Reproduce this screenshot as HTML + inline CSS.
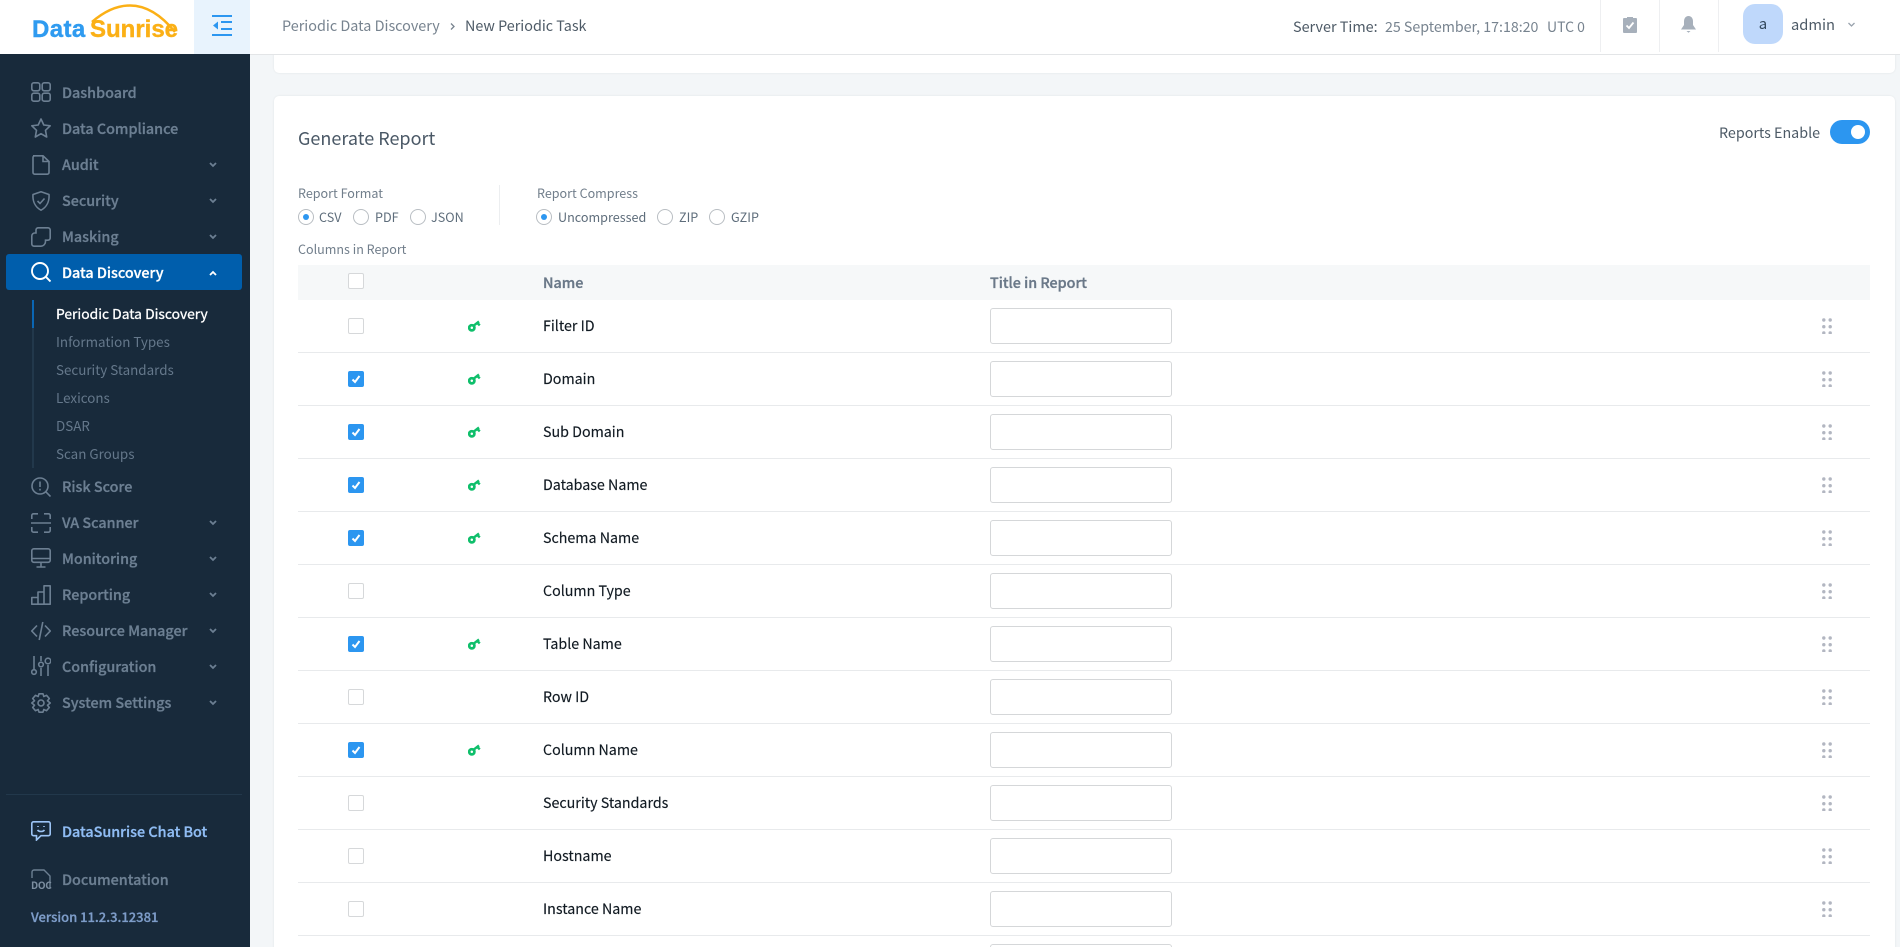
<!DOCTYPE html>
<html lang="en"><head><meta charset="utf-8"><title>New Periodic Task</title>
<style>
*{box-sizing:border-box}
html,body{margin:0;padding:0;width:1900px;height:947px;overflow:hidden;background:#f3f6f8;font-family:"Noto Sans CJK JP","Liberation Sans",sans-serif;color:#000}
#w{position:relative;width:1900px;height:947px;overflow:hidden;background:#f3f6f8}
.a{position:absolute;white-space:nowrap}
#side{position:absolute;left:0;top:54px;width:250px;height:893px;background:#182a3b}
.m{position:absolute;left:62px;font-size:14.350px;font-weight:500;line-height:20px;color:#6c7f92;white-space:nowrap;-webkit-text-stroke:.3px currentColor}
.s{position:absolute;left:56px;font-size:13.400px;line-height:20px;color:#65788b;white-space:nowrap}
.ic{position:absolute;left:31px;width:20px;height:20px;fill:none;stroke:#6c7f92;stroke-width:1.6}
.ch{position:absolute;left:208px;width:10px;height:6px;fill:none;stroke:#6c7f92;stroke-width:1.8}
.row{position:absolute;left:298px;width:1572px;height:53px;border-bottom:1px solid #e8eaec}
.cb{position:absolute;left:50px;top:18px;width:16px;height:16px;border:1px solid #d6d8da;border-radius:2px;background:#fff}
.on{background:#2c96f0;border-color:#2c96f0}
.on svg{position:absolute;left:2px;top:2px;width:10px;height:10px;fill:none;stroke:#fff;stroke-width:2}
.key{position:absolute;left:170px;top:19px;width:13px;height:13px}
.n{position:absolute;left:245px;top:15px;line-height:22px;font-size:14.250px;color:#111a22;white-space:nowrap;-webkit-text-stroke:.15px currentColor}
.in{position:absolute;left:692px;top:8px;width:182px;height:36px;border:1px solid #d5d7d9;border-radius:3px;background:#fff}
.dr{position:absolute;left:1524px;top:18px;width:10px;height:16px}
.r{position:absolute;top:209px;width:16px;height:16px;border:1px solid #b9bec3;border-radius:50%;background:#fff}
.r.c::after{content:"";position:absolute;left:4px;top:4px;width:6px;height:6px;border-radius:50%;background:#2c96f0}
.rl{position:absolute;top:207px;font-size:12.600px;line-height:20px;color:#5e6d7b;white-space:nowrap}
.lb{position:absolute;font-size:12.550px;line-height:20px;color:#717e8b;white-space:nowrap}
.th{position:absolute;top:273px;font-size:14.300px;font-weight:500;line-height:20px;color:#6b7989;white-space:nowrap;-webkit-text-stroke:.35px currentColor}
.sep{position:absolute;top:0;width:1px;height:52px;background:#eeeff1}
</style></head><body><div id="w">

<!-- cards -->
<div class="a" style="left:274px;top:50px;width:1621px;height:23px;background:#fff;border-radius:0 0 5px 5px;box-shadow:0 0 2px rgba(0,0,0,.08)"></div>
<div class="a" style="left:274px;top:96px;width:1621px;height:860px;background:#fff;border-radius:5px 5px 0 0;box-shadow:0 0 2px rgba(0,0,0,.08)"></div>

<!-- header -->
<div class="a" style="left:0;top:0;width:1900px;height:55px;background:#fff;border-bottom:1px solid #e3e5e7"></div>
<div class="a" style="left:0;top:0;width:194px;height:54px;background:#fff"></div>
<div class="a" style="left:194px;top:0;width:56px;height:54px;background:#e8f3fd"></div>
<div class="a" style="left:32px;top:14px;font-family:'Liberation Sans',sans-serif;font-size:24px;font-weight:700;line-height:32px;color:#2f9bf0;letter-spacing:.4px;-webkit-text-stroke:.4px currentColor">Data</div>
<div class="a" style="left:90px;top:14px;font-family:'Liberation Sans',sans-serif;font-size:24px;font-weight:700;line-height:32px;color:#fbb016;-webkit-text-stroke:.4px currentColor">Sunrise</div>
<svg class="a" style="left:32px;top:3px;width:150px;height:44px" viewBox="0 0 150 44" fill="none"><path d="M60 19C75 6 88 2.500 98 2.500C115 2.500 130 13 143 29" stroke="#fbb016" stroke-width="2.500"/></svg>
<svg class="a" style="left:212px;top:15px;width:21px;height:22px" viewBox="0 0 21 22" fill="none" stroke="#2c96f0" stroke-width="2"><path d="M0 1H20M9 7H20M9 14H20M0 20H20"/><path d="M6 6.500V14.500L1 10.500Z" fill="#2c96f0" stroke="none"/></svg>
<div class="a" style="left:282px;top:15px;font-size:14.400px;line-height:22px;color:#77838f">Periodic Data Discovery</div>
<svg class="a" style="left:450px;top:23px;width:5px;height:7px" viewBox="0 0 5 7" fill="none" stroke="#77838f" stroke-width="1.300"><path d="M1 .5L4 3.500L1 6.500"/></svg>
<div class="a" style="left:465px;top:15px;font-size:14.350px;line-height:22px;color:#4d5a66">New Periodic Task</div>
<div class="a" style="left:1293px;top:16px;font-size:14.400px;line-height:22px;color:#4d5a66">Server Time:</div>
<div class="a" style="left:1385px;top:16px;font-size:14.200px;line-height:22px;color:#77838f">25 September, 17:18:20</div>
<div class="a" style="left:1547px;top:16px;font-size:14px;line-height:22px;color:#77838f">UTC 0</div>
<div class="sep" style="left:1600px"></div><div class="sep" style="left:1659px"></div><div class="sep" style="left:1718px"></div>
<svg class="a" style="left:1623px;top:16px;width:14px;height:17px" viewBox="0 0 14 17"><path d="M1 2H4V1H10V2H13A1 1 0 0 1 14 3V16A1 1 0 0 1 13 17H1A1 1 0 0 1 0 16V3A1 1 0 0 1 1 2Z" fill="#a7b0bb"/><path d="M3.500 9.500L6 12L10.500 6.500" fill="none" stroke="#fff" stroke-width="1.800"/></svg>
<svg class="a" style="left:1681px;top:16px;width:15px;height:17px" viewBox="0 0 15 17" fill="#a7b0bb"><path d="M7.500 0C10.500 0 12 2.500 12 5.500V9L15 13.500H0L3 9V5.500C3 2.500 4.500 0 7.500 0Z"/><path d="M5.500 15H9.500L7.500 16.800Z"/></svg>
<div class="a" style="left:1743px;top:4px;width:40px;height:40px;border-radius:12px;background:#bfd8fb;text-align:center;font-size:15px;line-height:40px;color:#34495e">a</div>
<div class="a" style="left:1791px;top:14px;font-size:14.700px;line-height:22px;color:#4d5a66">admin</div>
<svg class="a" style="left:1848px;top:22px;width:7px;height:5px" viewBox="0 0 7 5" fill="none" stroke="#98a2ad" stroke-width="1.300"><path d="M.5 1L3.500 4L6.500 1"/></svg>

<!-- sidebar -->
<div id="side"></div>
<div class="a" style="left:6px;top:254px;width:236px;height:36px;background:#005eac;border-radius:3px"></div>
<div class="a" style="left:32px;top:300px;width:2px;height:168px;background:#22384b"></div>
<div class="a" style="left:32px;top:300px;width:2px;height:28px;background:#0a66b4"></div>

<svg class="ic" style="top:82px" viewBox="0 0 20 20"><rect x=".8" y=".8" width="8" height="8" rx="2"/><rect x="11.200" y=".8" width="8" height="8" rx="2"/><rect x=".8" y="11.200" width="8" height="8" rx="2"/><rect x="11.200" y="11.200" width="8" height="8" rx="2"/></svg>
<div class="m" style="top:83px">Dashboard</div>
<svg class="ic" style="top:118px" viewBox="0 0 20 20"><path d="M10 1L12.800 7L19.200 7.800L14.500 12.300L15.700 19L10 15.700L4.300 19L5.500 12.300L.8 7.800L7.200 7Z" stroke-linejoin="round"/></svg>
<div class="m" style="top:119px">Data Compliance</div>
<svg class="ic" style="top:155px" viewBox="0 0 20 20"><path d="M2 .8H12L18 6.500V17.500A1.700 1.700 0 0 1 16.300 19.200H3.700A1.700 1.700 0 0 1 2 17.500V2.500A1.700 1.700 0 0 1 3.700 .8ZM12 .8V6.500H18"/></svg>
<div class="m" style="top:155px">Audit</div>
<svg class="ch" style="top:162px" viewBox="0 0 10 6"><path d="M2 1L5 4L8 1"/></svg>
<svg class="ic" style="top:191px" viewBox="0 0 20 20"><path d="M10 .8L18 3.500C18.500 10 16 16 10 19.200C4 16 1.500 10 2 3.500Z" stroke-linejoin="round"/><path d="M6.500 10L9 12.500L13.500 7.500"/></svg>
<div class="m" style="top:191px">Security</div>
<svg class="ch" style="top:198px" viewBox="0 0 10 6"><path d="M2 1L5 4L8 1"/></svg>
<svg class="ic" style="top:227px" viewBox="0 0 20 20"><path d="M7 .8H17A2.200 2.200 0 0 1 19.200 3V11A2.200 2.200 0 0 1 17 13.200H14.500V14.500A4.700 4.700 0 0 1 10 19.200H3A2.200 2.200 0 0 1 .8 17V9A3 3 0 0 1 4 6H5V3A2.200 2.200 0 0 1 7 .8Z"/></svg>
<div class="m" style="top:227px">Masking</div>
<svg class="ch" style="top:234px" viewBox="0 0 10 6"><path d="M2 1L5 4L8 1"/></svg>
<svg class="ic" style="top:262px;stroke:#fff;stroke-width:1.900" viewBox="0 0 20 20"><circle cx="9" cy="9" r="8"/><path d="M14.700 14.700L19.500 19.500"/></svg>
<div class="m" style="top:263px;color:#fff">Data Discovery</div>
<svg class="ch" style="top:270px;stroke:#fff" viewBox="0 0 10 6"><path d="M2 5L5 2L8 5"/></svg>

<div class="s" style="top:303px;color:#fff;font-size:13.850px;-webkit-text-stroke:.3px #fff">Periodic Data Discovery</div>
<div class="s" style="top:331px">Information Types</div>
<div class="s" style="top:359px">Security Standards</div>
<div class="s" style="top:387px">Lexicons</div>
<div class="s" style="top:415px">DSAR</div>
<div class="s" style="top:443px">Scan Groups</div>

<svg class="ic" style="top:477px" viewBox="0 0 20 20"><circle cx="9" cy="9" r="8"/><path d="M14.700 14.700L19.500 19.500M9 4.500V10M9 11.800V13.500"/></svg>
<div class="m" style="top:477px">Risk Score</div>
<svg class="ic" style="top:513px" viewBox="0 0 20 20"><path d="M.8 6V2.500A1.700 1.700 0 0 1 2.500 .8H7M13 .8H17.500A1.700 1.700 0 0 1 19.200 2.500V6M.8 14V17.500A1.700 1.700 0 0 0 2.500 19.200H7M13 19.200H17.500A1.700 1.700 0 0 0 19.200 17.500V14M0 10H20"/></svg>
<div class="m" style="top:513px">VA Scanner</div>
<svg class="ch" style="top:520px" viewBox="0 0 10 6"><path d="M2 1L5 4L8 1"/></svg>
<svg class="ic" style="top:548px" viewBox="0 0 20 20"><rect x=".8" y=".8" width="18.400" height="13.500" rx="2"/><path d="M.8 10.500H19.200M10 14.300V19M5.500 19H14.500"/></svg>
<div class="m" style="top:549px">Monitoring</div>
<svg class="ch" style="top:556px" viewBox="0 0 10 6"><path d="M2 1L5 4L8 1"/></svg>
<svg class="ic" style="top:585px" viewBox="0 0 20 20"><path d="M.8 19.200V12.500H7V19.200ZM7 19.200V7H13V19.200ZM13 19.200V.8H19.200V19.200Z" stroke-linejoin="round"/></svg>
<div class="m" style="top:585px">Reporting</div>
<svg class="ch" style="top:592px" viewBox="0 0 10 6"><path d="M2 1L5 4L8 1"/></svg>
<svg class="ic" style="top:621px" viewBox="0 0 20 20"><path d="M6 4.500L.8 10L6 15.500M14 4.500L19.200 10L14 15.500M11.800 1L8.200 19"/></svg>
<div class="m" style="top:621px">Resource Manager</div>
<svg class="ch" style="top:628px" viewBox="0 0 10 6"><path d="M2 1L5 4L8 1"/></svg>
<svg class="ic" style="top:656px" viewBox="0 0 20 20"><path d="M3 0V13M10 0V5M10 12V20M17 9V20"/><circle cx="3" cy="16" r="2.300"/><circle cx="10" cy="8.500" r="2.300"/><circle cx="17" cy="5" r="2.800"/></svg>
<div class="m" style="top:657px">Configuration</div>
<svg class="ch" style="top:664px" viewBox="0 0 10 6"><path d="M2 1L5 4L8 1"/></svg>
<svg class="ic" style="top:693px" viewBox="0 0 20 20"><circle cx="10" cy="10" r="3"/><path d="M8 .8H12L12.800 3.500L15.500 2.300L18.300 5.500L16.500 7.800L19.200 10L16.500 12.200L18.300 14.500L15.500 17.700L12.800 16.500L12 19.200H8L7.200 16.500L4.500 17.700L1.700 14.500L3.500 12.200L.8 10L3.500 7.800L1.700 5.500L4.500 2.300L7.200 3.500Z" stroke-linejoin="round"/></svg>
<div class="m" style="top:693px">System Settings</div>
<svg class="ch" style="top:700px" viewBox="0 0 10 6"><path d="M2 1L5 4L8 1"/></svg>

<div class="a" style="left:6px;top:794px;width:236px;height:1px;background:#22384b"></div>
<svg class="ic" style="top:821px;stroke:#9cc4f5" viewBox="0 0 20 20"><path d="M2.500 .8H17.500A1.700 1.700 0 0 1 19.200 2.500V13A1.700 1.700 0 0 1 17.500 14.700H10L5.500 19V14.700H2.500A1.700 1.700 0 0 1 .8 13V2.500A1.700 1.700 0 0 1 2.500 .8Z"/><path d="M6.500 9C8 11 12 11 13.500 9M7 5V6M13 5V6"/></svg>
<div class="m" style="top:822px;color:#8fbcf3">DataSunrise Chat Bot</div>
<svg class="a" style="left:31px;top:869px;width:20px;height:20px" viewBox="0 0 20 20" fill="none" stroke="#6c7f92" stroke-width="1.400"><path d="M1 9V3A2 2 0 0 1 3 1H13L19 7V19.500"/></svg>
<div class="a" style="left:31px;top:880px;font-size:10px;font-weight:700;line-height:10px;color:#7c8ea0;letter-spacing:-.3px">DOC</div>
<div class="m" style="top:870px;color:#6c7f92">Documentation</div>
<div class="a" style="left:31px;top:908px;font-size:13px;font-weight:500;line-height:18px;color:#7d9cc8;-webkit-text-stroke:.3px currentColor">Version 11.2.3.12381</div>

<!-- content -->
<div class="a" style="left:298px;top:124px;font-size:18px;line-height:28px;color:#4a5866">Generate Report</div>
<div class="a" style="left:1719px;top:122px;font-size:14.300px;line-height:22px;color:#4d5a66">Reports Enable</div>
<div class="a" style="left:1830px;top:120px;width:40px;height:24px;border-radius:12px;background:#2c96f0"></div>
<div class="a" style="left:1851px;top:125px;width:14px;height:14px;border-radius:50%;background:#fff"></div>

<div class="lb" style="left:298px;top:183px">Report Format</div>
<div class="r c" style="left:298px"></div><div class="rl" style="left:319px">CSV</div>
<div class="r" style="left:353px"></div><div class="rl" style="left:375px">PDF</div>
<div class="r" style="left:410px"></div><div class="rl" style="left:431px">JSON</div>
<div class="a" style="left:499px;top:185px;width:1px;height:40px;background:#eceef0"></div>
<div class="lb" style="left:537px;top:183px">Report Compress</div>
<div class="r c" style="left:536px"></div><div class="rl" style="left:558px">Uncompressed</div>
<div class="r" style="left:657px"></div><div class="rl" style="left:679px">ZIP</div>
<div class="r" style="left:709px"></div><div class="rl" style="left:731px">GZIP</div>
<div class="lb" style="left:298px;top:239px">Columns in Report</div>

<div class="a" style="left:298px;top:265px;width:1572px;height:35px;background:#f6f8f9"></div>
<div class="cb" style="left:348px;top:273px"></div>
<div class="th" style="left:543px">Name</div>
<div class="th" style="left:990px">Title in Report</div>

<svg width="0" height="0" style="position:absolute">
<symbol id="k" viewBox="0 0 13 13"><circle cx="3.800" cy="8.800" r="2.600" fill="none" stroke="#0fbf6b" stroke-width="2.700"/><path d="M5.500 6.800L11 2.500M9 3.800L11.800 6.300" fill="none" stroke="#0fbf6b" stroke-width="2.400"/></symbol>
<symbol id="d" viewBox="0 0 10 16"><g fill="#b2b6c1"><circle cx="1.800" cy="2" r="1.700"/><circle cx="8.200" cy="2" r="1.700"/><circle cx="1.800" cy="8.700" r="1.700"/><circle cx="8.200" cy="8.700" r="1.700"/><circle cx="1.800" cy="15" r="1.700"/><circle cx="8.200" cy="15" r="1.700"/></g></symbol>
<symbol id="c" viewBox="0 0 10 10"><path d="M1.500 5.500L4 8L8.500 2" fill="none" stroke="#fff" stroke-width="2"/></symbol>
</svg>

<div class="row" style="top:300px"><div class="cb"></div><svg class="key"><use href="#k"/></svg><div class="n">Filter ID</div><div class="in"></div><svg class="dr"><use href="#d"/></svg></div>
<div class="row" style="top:353px"><div class="cb on"><svg><use href="#c"/></svg></div><svg class="key"><use href="#k"/></svg><div class="n">Domain</div><div class="in"></div><svg class="dr"><use href="#d"/></svg></div>
<div class="row" style="top:406px"><div class="cb on"><svg><use href="#c"/></svg></div><svg class="key"><use href="#k"/></svg><div class="n">Sub Domain</div><div class="in"></div><svg class="dr"><use href="#d"/></svg></div>
<div class="row" style="top:459px"><div class="cb on"><svg><use href="#c"/></svg></div><svg class="key"><use href="#k"/></svg><div class="n">Database Name</div><div class="in"></div><svg class="dr"><use href="#d"/></svg></div>
<div class="row" style="top:512px"><div class="cb on"><svg><use href="#c"/></svg></div><svg class="key"><use href="#k"/></svg><div class="n">Schema Name</div><div class="in"></div><svg class="dr"><use href="#d"/></svg></div>
<div class="row" style="top:565px"><div class="cb"></div><div class="n">Column Type</div><div class="in"></div><svg class="dr"><use href="#d"/></svg></div>
<div class="row" style="top:618px"><div class="cb on"><svg><use href="#c"/></svg></div><svg class="key"><use href="#k"/></svg><div class="n">Table Name</div><div class="in"></div><svg class="dr"><use href="#d"/></svg></div>
<div class="row" style="top:671px"><div class="cb"></div><div class="n">Row ID</div><div class="in"></div><svg class="dr"><use href="#d"/></svg></div>
<div class="row" style="top:724px"><div class="cb on"><svg><use href="#c"/></svg></div><svg class="key"><use href="#k"/></svg><div class="n">Column Name</div><div class="in"></div><svg class="dr"><use href="#d"/></svg></div>
<div class="row" style="top:777px"><div class="cb"></div><div class="n">Security Standards</div><div class="in"></div><svg class="dr"><use href="#d"/></svg></div>
<div class="row" style="top:830px"><div class="cb"></div><div class="n">Hostname</div><div class="in"></div><svg class="dr"><use href="#d"/></svg></div>
<div class="row" style="top:883px"><div class="cb"></div><div class="n">Instance Name</div><div class="in"></div><svg class="dr"><use href="#d"/></svg></div>
<div class="row" style="top:936px;border:0"><div class="in"></div></div>
</div></body></html>
